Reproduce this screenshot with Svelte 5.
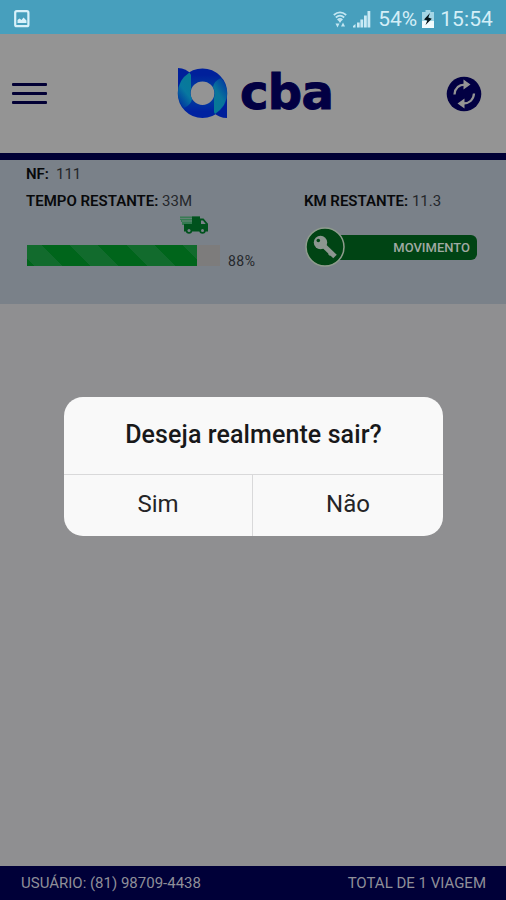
<script lang="ts">
    let open = true;
    let progress = 88;

    const trip = {
        nf: '111',
        time: '33M',
        km: '11.3',
        status: 'MOVIMENTO'
    };

    function close() {
        open = false;
    }
</script>

<div class="screen">
    <div class="status-bar">
        <svg class="picture" width="16" height="18" viewBox="0 0 16 18">
            <rect x="1.2" y="1.2" width="13.2" height="15" rx="1.5" fill="none" stroke="#d8f1fa" stroke-width="2.2" />
            <path d="M3.5 13V10l2-1.5 2 1.5 2-2.5 3 3V13z" fill="#d8f1fa" />
        </svg>
        <div class="status-right">
            <svg class="wifi" width="14" height="17" viewBox="0 0 14 17">
                <g fill="none" stroke="#c3e6f2" stroke-width="1.7">
                    <path d="M.8 4Q7-1.4 13.2 4" />
                    <path d="M2.8 6.5Q7 2.8 11.2 6.5" />
                    <path d="M4.6 9Q7 6.8 9.4 9" />
                </g>
                <path d="M5 9h4L7 12z" fill="#c3e6f2" />
                <path d="M2.5 12.5h4L4.5 16.5zM8 15.5h4l-2-4z" fill="#c3e6f2" />
            </svg>
            <svg class="signal" width="18" height="18" viewBox="0 0 18 18" fill="#c9eaf5">
                <path d="M0 17.5v-1.5l2.5-2v3.5zM4 12.5h2.7v5H4zM7.4 9.5h2.8v8H7.4zM11 5.5h2.8v12H11zM14.5 1h2.8v16.5h-2.8z" />
            </svg>
            <span class="percent">54%</span>
            <svg class="battery" width="12" height="18" viewBox="0 0 12 18">
                <path d="M3.5 0h5v2H12v16H0V2h3.5z" fill="#a4d6e5" />
                <path d="M0 11h12v7H0z" fill="#f2fbfd" />
                <path d="M8 3L2 9.5l3.3 1L3.5 15l6.3-6.2-3.5-1.2z" fill="#07151a" />
            </svg>
            <span class="clock">15:54</span>
        </div>
    </div>

    <header>
        <button class="menu" aria-label="Menu">
            <i></i>
            <i></i>
            <i></i>
        </button>

        <div class="logo">
            <svg width="51" height="51" viewBox="0 0 51 51">
                <defs>
                    <linearGradient id="ring" x1="0.5" y1="0" x2="0.5" y2="1">
                        <stop offset="0" stop-color="#00209b" />
                        <stop offset="0.5" stop-color="#0048a0" />
                        <stop offset="1" stop-color="#0022a0" />
                    </linearGradient>
                    <linearGradient id="leaf-left" x1="0.7" y1="0" x2="0.2" y2="1">
                        <stop offset="0" stop-color="#087b94" />
                        <stop offset="0.5" stop-color="#0878a0" />
                        <stop offset="1" stop-color="#00309f" />
                    </linearGradient>
                    <linearGradient id="leaf-right" x1="0.8" y1="0" x2="0.2" y2="1">
                        <stop offset="0" stop-color="#0038a0" />
                        <stop offset="0.5" stop-color="#08749c" />
                        <stop offset="1" stop-color="#087a94" />
                    </linearGradient>
                </defs>
                <path d="M1 0Q9 0 15 7L13 15L1 23z" fill="#001f9a" />
                <path d="M50 50Q42 50 36 44L38 35L50 27z" fill="#001f9a" />
                <circle cx="25.5" cy="25.2" r="18.3" fill="none" stroke="url(#ring)" stroke-width="13" />
                <path d="M12.5 4.5Q1 12 1 25Q2 35 7 40Q14 37 15 31Q12 25 14 21V7z" fill="url(#leaf-left)" />
                <path d="M38 46Q50 38 50 25Q49 15 44 10Q37 13 36 19Q39 25 37 30V44z" fill="url(#leaf-right)" />
            </svg>
            <span>cba</span>
        </div>

        <button class="refresh" aria-label="Atualizar">
            <svg width="36" height="36" viewBox="0 0 36 36">
                <circle cx="18" cy="18" r="17.3" fill="#020043" />
                <g fill="none" stroke="#949494" stroke-width="2.3">
                    <path d="M8.5 18.5C9 12 13 8.8 19 8.7" />
                    <path d="M28 17.5C27.5 24 23 27.5 17 27.5" />
                </g>
                <path d="M17.5 3.5L24.5 8.5L17.5 13.5zM18.5 22.5L11.5 27.5L18.5 32.5z" fill="#949494" />
            </svg>
        </button>
    </header>

    <section class="trip">
        <div class="nf"><b>NF:</b><span>{trip.nf}</span></div>
        <div class="columns">
            <div class="time">
                <p><b>TEMPO RESTANTE:</b> {trip.time}</p>
                <svg class="truck" width="28" height="18" viewBox="0 0 28 18">
                    <path d="M0 .5h20v12H4V9H2V6H1V4H0z" fill="#347a51" />
                    <path d="M12 .5h8v2h3.5l4.5 5.2V15.5H4V8h8z" fill="#00521d" />
                    <path d="M0 2.4h12M2 5h10" stroke="#68847a" stroke-width="1" />
                    <path d="M21 4.5h2l2.7 3.6H21z" fill="#7a828a" />
                    <circle cx="9" cy="14.5" r="3.2" fill="#00521d" />
                    <circle cx="9" cy="14.5" r="1.5" fill="#7a828a" />
                    <circle cx="22.5" cy="14.5" r="3.2" fill="#00521d" />
                    <circle cx="22.5" cy="14.5" r="1.5" fill="#7a828a" />
                </svg>
                <div class="progress">
                    <div class="track">
                        <div class="fill" style="width: {progress}%"></div>
                    </div>
                    <span>{progress}%</span>
                </div>
            </div>
            <div class="distance">
                <p><b>KM RESTANTE:</b> {trip.km}</p>
                <div class="movement">
                    <svg width="40" height="40" viewBox="0 0 40 40">
                        <circle cx="20" cy="20" r="19" fill="#004414" stroke="#8f9c8e" stroke-width="1.5" />
                        <path d="M18 18L30 29.5" stroke="#8c9690" stroke-width="5" />
                        <path d="M23 27l2-2 2 2-2 2z" fill="#8c9690" />
                        <circle cx="15.5" cy="15.5" r="6.7" fill="#8c9690" />
                        <circle cx="13.3" cy="13.5" r="1.8" fill="#004414" />
                    </svg>
                    <span>{trip.status}</span>
                </div>
            </div>
        </div>
    </section>

    <main></main>

    <footer>
        <span class="user">USUÁRIO: (81) 98709-4438</span>
        <span class="total">TOTAL DE 1 VIAGEM</span>
    </footer>

    {#if open}
        <div class="dialog" role="dialog" aria-labelledby="title">
            <h2 id="title">Deseja realmente sair?</h2>
            <div class="actions">
                <button on:click={close}>Sim</button>
                <button on:click={close}>Não</button>
            </div>
        </div>
    {/if}
</div>

<style>
    :global(body) {
        margin: 0;
    }

    .screen {
        position: relative;
        display: flex;
        flex-direction: column;
        width: 506px;
        height: 900px;
        overflow: hidden;
        background: #8f8f91;
        font-family: Roboto, sans-serif;
    }

    svg {
        display: block;
        flex: none;
    }

    button {
        padding: 0;
        border: 0;
        background: none;
        font: inherit;
        cursor: pointer;
    }

    .status-bar {
        display: flex;
        justify-content: space-between;
        align-items: center;
        height: 34px;
        padding: 3px 13px 0 14px;
        box-sizing: border-box;
        background: #479fbd;
        color: #d4eef7;
        font-size: 21px;
        line-height: 30px;
    }

    .status-right {
        display: flex;
        align-items: center;
    }

    .wifi {
        margin-top: 2px;
    }

    .signal {
        margin: 0 7px 0 6px;
    }

    .battery {
        margin: 0 6px 0 5px;
    }

    .clock {
        letter-spacing: 0.1px;
    }

    header {
        display: flex;
        align-items: center;
        height: 119px;
        padding: 0 24px 0 12px;
        background: #949494;
    }

    .menu {
        display: flex;
        flex-direction: column;
        gap: 6px;
        width: 35px;
    }

    .menu i {
        height: 3.3px;
        border-radius: 1px;
        background: #020035;
    }

    .logo {
        display: flex;
        align-items: center;
        gap: 12px;
        margin-left: 130px;
        color: #020043;
    }

    .logo span {
        padding-bottom: 4px;
        font: bold 48px/50px "DejaVu Sans", sans-serif;
        letter-spacing: -0.6px;
        -webkit-text-stroke: 1px #020043;
        stroke-linejoin: round;
    }

    .refresh {
        margin-left: auto;
    }

    .trip {
        height: 151px;
        box-sizing: border-box;
        padding: 5px 26px 0;
        border-top: 7px solid #000035;
        background: #7a8189;
        color: #24272b;
        font-size: 15px;
        line-height: 18px;
    }

    b {
        color: #08090b;
        font-weight: 600;
    }

    .nf span {
        margin-left: 7px;
    }

    .columns {
        display: flex;
        margin-top: 9px;
    }

    .time {
        width: 278px;
    }

    p {
        margin: 0;
        white-space: nowrap;
    }

    .truck {
        margin: 6px 0 0 154px;
    }

    .progress {
        display: flex;
        height: 22px;
        margin-top: 11px;
    }

    .track {
        width: 193px;
        height: 21px;
        margin: 0 8px 0 1px;
        background: #7d7c7c;
    }

    .fill {
        height: 21px;
        background: repeating-linear-gradient(45deg, #00651b 0 5px, #126b2d 5px 25px, #00651b 25px 40px);
    }

    .progress span {
        padding-top: 7px;
        font-size: 14px;
        letter-spacing: 0.5px;
    }

    .movement {
        display: flex;
        align-items: center;
        margin: 17px 0 0 1px;
    }

    .movement svg {
        z-index: 1;
    }

    .movement span {
        width: 139px;
        height: 25px;
        box-sizing: border-box;
        margin-left: -7px;
        padding-right: 7px;
        border-radius: 0 6px 6px 0;
        background: #004414;
        color: #a0aaa3;
        font-size: 13px;
        font-weight: 500;
        line-height: 26px;
        text-align: right;
    }

    main {
        flex: 1;
    }

    footer {
        display: flex;
        justify-content: space-between;
        height: 34px;
        padding: 0 20px 0 21px;
        background: #000038;
        color: #8f8f98;
        font-size: 15px;
        line-height: 34px;
    }

    .dialog {
        position: absolute;
        top: 397px;
        left: 64px;
        width: 379px;
        height: 139px;
        overflow: hidden;
        border-radius: 19px;
        background: #f9f9f9;
        color: #18181a;
        text-align: center;
    }

    h2 {
        height: 77px;
        margin: 0;
        border-bottom: 1px solid #d9d9da;
        font-size: 25px;
        font-weight: 500;
        line-height: 76px;
        letter-spacing: 0.1px;
    }

    .actions {
        display: flex;
        height: 61px;
    }

    .actions button {
        width: 188px;
        padding-bottom: 3px;
        color: #252527;
        font-size: 24px;
    }

    .actions button + button {
        width: 191px;
        border-left: 1px solid #d9d9da;
    }
</style>
